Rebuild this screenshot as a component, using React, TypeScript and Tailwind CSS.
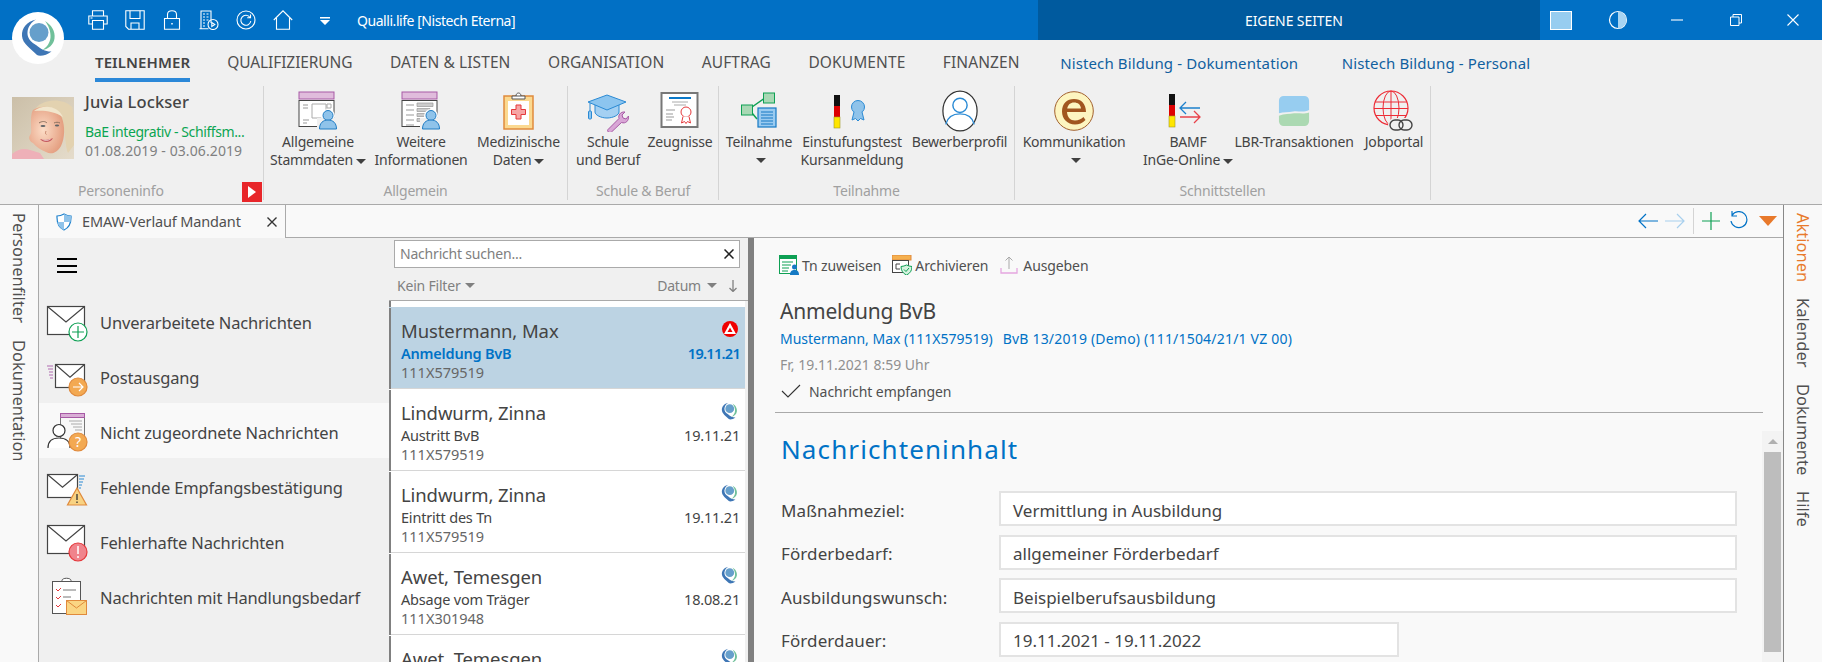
import type { ReactNode } from "react"

const LogoMark = ({ className, viewBox = "0 0 52 52" }: { className: string; viewBox?: string }) => (
  <svg viewBox={viewBox} className={className}>
    <circle cx="27" cy="20.5" r="9.5" fill="#669fcb" />
    <path d="M24 7.5C15 9.5 9.5 16 10 24c.5 8 9 12.5 15 19 2.5 1.5 10 .5 14.5-3.5-5 .5-11-2.5-15.500-6.500C18.500 30 15 25.500 15.500 20c.5-5.500 4-10 8.500-12.500Z" fill="#3e76b5" />
    <path d="M33 9c6 3.500 10.500 10 9.500 17.500-.8 6-6 10.500-12 11.500 4.500-3 7.500-7 8-12.500.4-6-2-12-5.500-16.500Z" fill="#70c09a" />
  </svg>
)

const QuickIcon = ({ children }: { children: ReactNode }) => (
  <svg viewBox="0 0 20 20" className="w-5 h-5" fill="none" stroke="white" strokeWidth="1.1">
    {children}
  </svg>
)

const topIcons = [
  <><path d="M4.500 6V.8h11V6M4.500 14H.8V6h18.400v8h-3.700" /><path d="M4.500 10.500h11v8.700h-11z" /><path d="M2.500 8h2" /></>,
  <><path d="M.8.800h18.400v18.400H3.500L.8 16.500z" /><path d="M5 .8v7.700h10V.8M6 19v-6h8v6" /></>,
  <><path d="M2.500 8.500h15v10.700h-15zM5.500 8.500V4.500C5.500 2 7.500.8 10 .8s4.500 1.200 4.500 3.700v4" /><path d="M10 13v1.500" strokeWidth="1.500" /></>,
  <><path d="M2 18.500V1h10v12M.5 18.800h9" /><path d="M4 4h2M7.500 4h2M4 7h2M7.500 7h2M4 10h2M7.500 10h2M4 13h2M4 16h2" /><circle cx="14" cy="14.500" r="5" /><path d="M12.800 12.500v4l3-2z" /></>,
  <><circle cx="10" cy="10" r="9" /><path d="M14 7.500A5 5 0 1 0 14.800 11M14.500 4.500v3.300h-3.300" /></>,
  <><path d="M.8 10 10 .8 19.200 10M3.500 8v11.200h13V8" /></>,
]

function TitleBar() {
  return (
    <div className="h-10 flex items-stretch bg-[#0170c5] text-white">
      <div className="flex-1 flex items-center pl-[88px] gap-[17px]">
        {topIcons.map((icon, i) => (
          <QuickIcon key={i}>{icon}</QuickIcon>
        ))}
        <svg viewBox="0 0 10 8" className="w-2.5 h-2 ml-[10px] mt-px" fill="white">
          <path d="M0 0h10v1.500H0zM0 3h10L5 8z" />
        </svg>
        <span className="ml-2.5 text-[14px] tracking-[-0.45px] whitespace-nowrap">Qualli.life [Nistech Eterna]</span>
      </div>
      <div className="w-[502px] bg-[#005a9e] flex items-center pl-[207px] text-[14px] tracking-[-0.1px]">EIGENE SEITEN</div>
      <div className="w-[282px] flex items-center pl-2.5">
        <div className="w-[22px] h-[19px] bg-[#97cdf0] border border-white" />
        <svg viewBox="0 0 20 20" className="w-5 h-5 ml-[36px]" >
          <circle cx="10" cy="10" r="8.500" fill="#0170c5" stroke="white" strokeWidth="1.2" />
          <path d="M10 1.500a8.500 8.500 0 0 1 0 17z" fill="#a8d4f2" />
        </svg>
        <svg viewBox="0 0 12 12" className="w-3 h-3 ml-[43px]" stroke="white" strokeWidth="1.1"><path d="M0 6h12" /></svg>
        <svg viewBox="0 0 12 12" className="w-3 h-3 ml-[47px]" stroke="white" strokeWidth="1" fill="none"><path d="M.5 3h8.500v8.500H.5zM3 3V.5h8.500V9H9" /></svg>
        <svg viewBox="0 0 12 12" className="w-3 h-3 ml-[45px]" stroke="white" strokeWidth="1.1"><path d="m.5.500 11 11M11.500.500l-11 11" /></svg>
      </div>
    </div>
  )
}

function RibbonTabs() {
  return (
    <div className="h-[45px] flex pl-[95px] bg-[#f0f0f0] text-[15.500px] text-[#505050] tracking-[0.1px] whitespace-nowrap">
      <div className="h-[42px] flex items-center text-[15px] font-semibold text-[#444] border-b-[4px] border-[#2b88d8] pt-[7px] mr-[37px]">TEILNEHMER</div>
      <div className="flex items-center gap-[37.500px] pt-[1px]">
        <span className="tracking-[-0.1px]">QUALIFIZIERUNG</span>
        <span>DATEN & LISTEN</span>
        <span>ORGANISATION</span>
        <span>AUFTRAG</span>
        <span>DOKUMENTE</span>
        <span>FINANZEN</span>
        <span className="text-[15px] tracking-[0.12px] text-[#10609f] ml-[3px]">Nistech Bildung - Dokumentation</span>
        <span className="text-[15px] tracking-[0.12px] text-[#10609f] ml-[6px]">Nistech Bildung - Personal</span>
      </div>
    </div>
  )
}

const Caret = () => <span className="inline-block align-middle ml-[3px] mt-px border-x-[5px] border-x-transparent border-t-[5px] border-t-[#404040]" />

const PersonBadge = () => (
  <g>
    <circle cx="30" cy="24.500" r="5" fill="#8fc3ea" stroke="#1f7cc4" />
    <path d="M21.500 38c0-6 3.500-9 8.500-9s8.500 3 8.500 9z" fill="#8fc3ea" stroke="#1f7cc4" />
  </g>
)

const ribbonIcons: Record<string, ReactNode> = {
  stamm: (
    <svg viewBox="0 0 40 40" className="w-10 h-10">
      <rect x="1" y="1" width="35" height="7" fill="#e0bcdc" stroke="#a75aa5" />
      <rect x="1" y="9.500" width="35" height="26" fill="#fff" stroke="#444" />
      <path d="M5 14h5M5 17h5M5 29h6M5 32h4" stroke="#999" />
      <path d="M14 13h14v14H14z" fill="#fff" stroke="#aaa" />
      <path d="M29 13h4v4h-4z" fill="none" stroke="#aaa" />
      <circle cx="30" cy="25" r="7" fill="#fff" /><rect x="19" y="27" width="21" height="13" fill="#f0f0f0" />
      <PersonBadge />
    </svg>
  ),
  weitere: (
    <svg viewBox="0 0 40 40" className="w-10 h-10">
      <rect x="1" y="1" width="35" height="7" fill="#e0bcdc" stroke="#a75aa5" />
      <rect x="1" y="9.500" width="35" height="26" fill="#fff" stroke="#444" />
      <path d="M5 14h8M5 19h8M5 24h8M5 29h8M5 34h8" stroke="#999" />
      <path d="M16 12h16v3.500H16zM16 17.500h13v3H16zM16 22.500h10v3H16zM16 27.500h6v3h-6z" fill="#ccc" stroke="#999" strokeWidth=".7" />
      <circle cx="30" cy="25" r="7" fill="#fff" /><rect x="19" y="27" width="21" height="13" fill="#f0f0f0" />
      <PersonBadge />
    </svg>
  ),
  med: (
    <svg viewBox="0 0 32 40" className="w-8 h-10">
      <rect x="1" y="5" width="29" height="33" fill="#fbd990" stroke="#e08a3c" strokeWidth="1.500" />
      <rect x="5" y="10" width="21" height="24" fill="#fff" />
      <path d="M9 5h13v3H9zM13 5c0-4 5-4 5 0" fill="#fff" stroke="#555" />
      <path d="M13 14h5v4.500h4.500v5H18V28h-5v-4.500H8.500v-5H13z" fill="#f6a5a5" stroke="#e5383b" />
    </svg>
  ),
  schule: (
    <svg viewBox="0 0 42 42" className="w-[42px] h-[42px]">
      <path d="M8 14v8c0 3 6 6 12 6s12-3 12-6v-8" fill="#a4d0f2" stroke="#2a8ad4" />
      <path d="M1 12 20 5l19 7-19 8z" fill="#8cc5ef" stroke="#2a8ad4" />
      <path d="M3 13v10" stroke="#2a8ad4" /><rect x="1.500" y="21" width="3" height="8" rx="1" fill="#8cc5ef" stroke="#2a8ad4" />
      <path d="M21 39.500 32 28.500c-1-3 1-7 6-6.500l-3 3 1 3 3 1 2.500-3c.5 5-3 8-7 6.500L24.500 42c-2 1.500-5-.5-3.500-2.500Z" fill="#d9a6d6" stroke="#a75aa5" />
    </svg>
  ),
  zeug: (
    <svg viewBox="0 0 40 40" className="w-10 h-10">
      <rect x="1.500" y="2" width="36" height="34" fill="#fff" stroke="#777" strokeWidth="2" />
      <path d="M9 7h22" stroke="#0a78c8" strokeWidth="2" /><path d="M12 11h16M14 14h12" stroke="#aaa" />
      <path d="M6 19h9M6 23h7M6 26h8M6 29h6" stroke="#999" />
      <circle cx="26" cy="21" r="5" fill="#fff" stroke="#e5383b" /><path d="M23 25.500 21.500 32l3-1.500 1.500 2 1.500-2 3 1.500-1.500-6.500" fill="#fff" stroke="#e5383b" />
    </svg>
  ),
  teil: (
    <svg viewBox="0 0 40 40" className="w-10 h-10">
      <path d="M13 16 26 7M13 22l5 6" stroke="#0ea054" strokeWidth="1.500" />
      <rect x="24.500" y="2" width="11" height="10" fill="#a8d8b4" stroke="#0ea054" />
      <rect x="2.500" y="14" width="11" height="10" fill="#a8d8b4" stroke="#0ea054" />
      <rect x="19" y="17" width="18" height="19" fill="#9acbf0" stroke="#1579c4" strokeWidth="1.200" />
      <path d="M22 21h12M22 24h12M22 27h12M22 30h12M22 33h12" stroke="#1579c4" />
    </svg>
  ),
  ribbon: (
    <svg viewBox="0 0 40 40" className="w-10 h-10">
      <rect x="2" y="4" width="6" height="11" fill="#111" />
      <rect x="2" y="15" width="6" height="11" fill="#dd0000" />
      <rect x="2" y="26" width="6" height="11" fill="#ffe600" stroke="#a09a2a" strokeWidth=".6" />
      <circle cx="26" cy="16" r="6.500" fill="#8fc3ea" stroke="#2a8ad4" />
      <path d="M22 21l-2 8 3.500-1.500L26 30l2.500-2.500L32 29l-2-8" fill="#8fc3ea" stroke="#2a8ad4" />
    </svg>
  ),
  profil: (
    <svg viewBox="0 0 40 44" className="w-[38px] h-[44px]">
      <ellipse cx="20" cy="22" rx="18" ry="21" fill="#fff" stroke="#333" strokeWidth="1.300" />
      <circle cx="20" cy="16" r="7.500" fill="#fff" stroke="#2a8ad4" strokeWidth="1.500" />
      <path d="M5 36c2-8 8-11 15-11s13 3 15 11" fill="none" stroke="#2a8ad4" strokeWidth="1.500" />
    </svg>
  ),
  kommu: (
    <svg viewBox="0 0 40 40" className="w-10 h-10">
      <circle cx="20" cy="20" r="19.300" fill="#fdf5c0" stroke="#a2602e" />
      <path d="M8 20.500C8 12.500 13 8 20 8s12 4.500 12 13H13c.3 5 3.300 8.500 8 8.500 3.500 0 6-1.300 8.500-3.500l2 3c-3 3-6.500 4.500-10.500 4.500C13.500 33.500 8 28 8 20.500Zm5.200-3H27c-.5-4-3-6-7-6-3.700 0-6 2.200-6.800 6Z" fill="#a1561f" />
    </svg>
  ),
  bamf: (
    <svg viewBox="0 0 40 40" className="w-10 h-10">
      <rect x="1" y="3" width="6" height="11" fill="#111" />
      <rect x="1" y="14" width="6" height="11" fill="#dd0000" />
      <rect x="1" y="25" width="6" height="11" fill="#ffe600" stroke="#a09a2a" strokeWidth=".6" />
      <path d="M32 17H12M18 11l-6 6 6 6" fill="none" stroke="#1d80cc" strokeWidth="1.300" />
      <path d="M12 25h20M26 19l6 6-6 6" fill="none" stroke="#e8424a" strokeWidth="1.300" transform="translate(0 1)" />
    </svg>
  ),
  lbr: (
    <svg viewBox="0 0 34 34" className="w-8 h-8">
      <path d="M1 6a5 5 0 0 1 5-5h22a5 5 0 0 1 5 5v10c-6 3-12 .5-17 1.500-5 .8-10 .5-15 2z" fill="#97cdf0" />
      <path d="M33 18.500V28a5 5 0 0 1-5 5H6a5 5 0 0 1-5-5v-6c6-2 11-1.500 16-2.500 5-.5 11 1 16-1z" fill="#abd9b2" />
    </svg>
  ),
  job: (
    <svg viewBox="0 0 42 42" className="w-[42px] h-[42px]" fill="none">
      <circle cx="18" cy="18" r="17" stroke="#ed2c36" strokeWidth="1.200" />
      <ellipse cx="18" cy="18" rx="8" ry="17" stroke="#ed2c36" />
      <path d="M18 1v34M2 12h32M1 18.500h34M3 25.500h30" stroke="#ed2c36" />
      <rect x="15" y="28" width="27" height="13" rx="6.500" fill="#f0f0f0" />
      <rect x="17" y="30" width="13" height="10" rx="5" stroke="#444" strokeWidth="1.400" />
      <rect x="26" y="30" width="13" height="10" rx="5" stroke="#444" strokeWidth="1.400" />
    </svg>
  ),
}

interface RibbonBtnProps {
  icon: string
  w: string
  l1: string
  l2?: string
  caretInline?: boolean
  caretOnly?: boolean
}

function RibbonBtn({ icon, w, l1, l2, caretInline, caretOnly }: RibbonBtnProps) {
  return (
    <div className={`${w} shrink-0 flex flex-col items-center text-[14px] leading-[18px] text-[#444] tracking-[-0.2px] whitespace-nowrap`}>
      <div className="h-[45px] flex items-center justify-center">{ribbonIcons[icon]}</div>
      <div>{l1}</div>
      {l2 && (
        <div>
          {l2}
          {caretInline && <Caret />}
        </div>
      )}
      {caretOnly && (
        <div className="h-[18px] flex items-center">
          <Caret />
        </div>
      )}
    </div>
  )
}

function RibbonGroup({ w, label, children }: { w: string; label: string; children: ReactNode }) {
  return (
    <div className={`${w} shrink-0 h-[114px] mt-px border-r border-[#d4d4d4] flex flex-col`}>
      <div className="flex flex-1 pt-0.5">{children}</div>
      <div className="h-[18px] text-center text-[14px] leading-[18px] text-[#a0a0a0] tracking-[-0.2px]">{label}</div>
    </div>
  )
}

const Avatar = () => (
  <svg viewBox="0 0 62 62" className="w-[62px] h-[62px] shrink-0">
    <defs>
      <linearGradient id="bgp" x1="0" x2="1" y1="0" y2="1">
        <stop offset="0" stopColor="#cbbfa8" />
        <stop offset="1" stopColor="#e5dccb" />
      </linearGradient>
      <radialGradient id="face" cx=".4" cy=".5" r=".65">
        <stop offset="0" stopColor="#fcdcc6" />
        <stop offset="1" stopColor="#e2997a" />
      </radialGradient>
      <filter id="soft"><feGaussianBlur stdDeviation=".5" /></filter>
    </defs>
    <rect width="62" height="62" fill="url(#bgp)" />
    <g filter="url(#soft)">
      <path d="M22 14C28 2 50 0 60 10l2 12v26l-6 8c-3-6-2-20-6-30-4-8-16-8-28-12Z" fill="#e3d2b0" />
      <path d="M0 57c6-5 12-6 18-4l10 3 4 6H0Z" fill="#eeb0b8" />
      <path d="M21 13c10-6 24-4 29 8 3 8 3 20-1 28-4 7-10 9-15 6-5-2-10-5-13-9-3-1-5-5-3-8 2-2 1-6 1-10 0-6 0-12 2-15Z" fill="url(#face)" />
      <path d="M22 14c8-7 24-6 29 6-9-6-20-7-29-6Z" fill="#f1e6cd" />
      <path d="M27 26c3-2 6-2 8 0M42 26c2-1 4-1 6 0" stroke="#8d7260" strokeWidth="1" fill="none" />
      <ellipse cx="31" cy="29" rx="2.500" ry="1.100" fill="#5f6468" />
      <ellipse cx="45" cy="28.500" rx="2.200" ry="1.100" fill="#5f6468" />
      <path d="M34 34c-.5 1.500-1 3 .5 3.500" stroke="#c98a70" fill="none" />
      <path d="M28 42c4 1 9 1 13-1-2 5-10 5-13 1Z" fill="#c4585e" />
      <path d="M30 42.500c3 .5 6 .5 9-.5-2 2-7 2-9 .5Z" fill="#fff" />
    </g>
  </svg>
)

function Ribbon() {
  return (
    <div className="h-[120px] flex bg-[#f0f0f0] border-b border-[#aaa]">
      <div className="w-[264px] shrink-0 h-[114px] mt-px border-r border-[#d4d4d4] flex flex-col relative">
        <div className="flex flex-1 pl-3 pt-[11px]">
          <Avatar />
          <div className="pl-[11px] -mt-[7px] whitespace-nowrap">
            <div className="text-[16.500px] leading-[24px] font-medium text-[#444] tracking-[0.1px]">Juvia Lockser</div>
            <div className="text-[14px] leading-[19px] text-[#0ba552] mt-[8px] tracking-[-0.4px]">BaE integrativ - Schiffsm...</div>
            <div className="text-[14px] leading-[19px] text-[#808080] tracking-[0.1px]">01.08.2019 - 03.06.2019</div>
          </div>
        </div>
        <div className="h-[18px] pl-[78px] text-[14px] leading-[18px] text-[#a0a0a0] tracking-[-0.2px]">Personeninfo</div>
        <div className="absolute left-[242px] top-[96px] w-5 h-5 bg-[#e8262a] flex items-center justify-center">
          <svg viewBox="0 0 8 12" className="w-2 h-3" fill="white"><path d="M0 0l8 6-8 6z" /></svg>
        </div>
      </div>
      <RibbonGroup w="w-[304px]" label="Allgemein">
        <RibbonBtn icon="stamm" w="w-[108px]" l1="Allgemeine" l2="Stammdaten" caretInline />
        <RibbonBtn icon="weitere" w="w-[98px]" l1="Weitere" l2="Informationen" />
        <RibbonBtn icon="med" w="w-[97px]" l1="Medizinische" l2="Daten" caretInline />
      </RibbonGroup>
      <RibbonGroup w="w-[151px]" label="Schule & Beruf">
        <RibbonBtn icon="schule" w="w-[80px]" l1="Schule" l2="und Beruf" />
        <RibbonBtn icon="zeug" w="w-[64px]" l1="Zeugnisse" />
      </RibbonGroup>
      <RibbonGroup w="w-[296px]" label="Teilnahme">
        <RibbonBtn icon="teil" w="w-[80px]" l1="Teilnahme" caretOnly />
        <RibbonBtn icon="ribbon" w="w-[106px]" l1="Einstufungstest" l2="Kursanmeldung" />
        <RibbonBtn icon="profil" w="w-[109px]" l1="Bewerberprofil" />
      </RibbonGroup>
      <RibbonGroup w="w-[416px]" label="Schnittstellen">
        <RibbonBtn icon="kommu" w="w-[118px]" l1="Kommunikation" caretOnly />
        <RibbonBtn icon="bamf" w="w-[110px]" l1="BAMF" l2="InGe-Online" caretInline />
        <RibbonBtn icon="lbr" w="w-[102px]" l1="LBR-Transaktionen" />
        <div className="ml-[16px]">
          <RibbonBtn icon="job" w="w-[66px]" l1="Jobportal" />
        </div>
      </RibbonGroup>
    </div>
  )
}

const Env = ({ x = 0.5, y = 0.5, w = 37, h = 28 }: { x?: number; y?: number; w?: number; h?: number }) => (
  <g>
    <rect x={x} y={y} width={w} height={h} fill="#fff" stroke="#444" strokeWidth="1.200" />
    <path d={`M${x} ${y}L${x + w * 0.5} ${y + h * 0.55}L${x + w} ${y}`} fill="none" stroke="#444" strokeWidth="1.200" />
  </g>
)

const Badge = ({ fill, stroke, children }: { fill: string; stroke: string; children: ReactNode }) => (
  <g>
    <circle cx="31" cy="31" r="9" fill={fill} stroke={stroke} strokeWidth="1.200" />
    {children}
  </g>
)

const navItems: { label: string; icon: ReactNode }[] = [
  {
    label: "Unverarbeitete Nachrichten",
    icon: (
      <>
        <Env y={5.5} />
        <Badge fill="#fff" stroke="#0ea054"><path d="M31 25v12M25 31h12" stroke="#0ea054" strokeWidth="1.200" /></Badge>
      </>
    ),
  },
  {
    label: "Postausgang",
    icon: (
      <>
        <path d="M0 10h6M1 13h5M2 16h4M2 19h4M3 22h3" stroke="#b06ab0" />
        <Env x={8.5} y={8.5} w={29} h={23} />
        <Badge fill="#f3a952" stroke="#e08a3c"><path d="M26 31h10M32 27l4 4-4 4" fill="none" stroke="#fff" strokeWidth="1.200" /></Badge>
      </>
    ),
  },
  {
    label: "Nicht zugeordnete Nachrichten",
    icon: (
      <>
        <rect x="13.500" y="2.500" width="24" height="28" fill="#f8f8f8" stroke="#777" />
        <rect x="13.500" y="2.500" width="24" height="4" fill="#d9aed6" stroke="#a75aa5" />
        <path d="M22 10h13M24 13h11M26 16h9M28 19h7" stroke="#aaa" />
        <path d="M1 37c0-7 4-10 11-10s11 3 11 10" fill="#fff" stroke="#333" strokeWidth="1.200" />
        <circle cx="12" cy="19.500" r="6" fill="#fff" stroke="#333" strokeWidth="1.200" />
        <Badge fill="#f3a952" stroke="#e08a3c"><text x="31" y="36" textAnchor="middle" fontSize="14" fill="#fff" fontFamily="Noto Sans">?</text></Badge>
      </>
    ),
  },
  {
    label: "Fehlende Empfangsbestätigung",
    icon: (
      <>
        <path d="M32 10h6M32 13h5M32 16h4M32 19h3M32 22h2" stroke="#2a8ad4" />
        <Env y={8.5} w={30} h={23} />
        <path d="M30 22 39.500 39h-19Z" fill="#f8d282" stroke="#e08a3c" strokeWidth="1.200" />
        <path d="M30 28v6M30 35.500v1.500" stroke="#333" strokeWidth="1.300" />
      </>
    ),
  },
  {
    label: "Fehlerhafte Nachrichten",
    icon: (
      <>
        <Env y={4.5} />
        <Badge fill="#f0848c" stroke="#e5383b"><path d="M31 25v8M31 35v2" stroke="#fff" strokeWidth="1.500" /></Badge>
      </>
    ),
  },
  {
    label: "Nachrichten mit Handlungsbedarf",
    icon: (
      <>
        <rect x="5.500" y="5.500" width="28" height="32" fill="#fff" stroke="#555" />
        <path d="M15 5.500h9v-1c0-3-9-3-9 0z" fill="#fff" stroke="#555" />
        <path d="M9 13l2 2 3-3M9 21l2 2 3-3M9 29l2 2 3-3" fill="none" stroke="#e5383b" />
        <path d="M16 14h13M16 21h8" stroke="#777" />
        <rect x="19.500" y="24.500" width="20" height="14" fill="#fad583" stroke="#e08a3c" />
        <path d="M19.500 24.500 29.500 32l10-7.500" fill="none" stroke="#e08a3c" />
      </>
    ),
  },
]

function SideNav() {
  return (
    <div className="w-[350px] shrink-0 bg-[#f0f0f0] flex flex-col">
      <div className="h-[55px] pt-5 pl-[18px]">
        <div className="w-5 h-[15px] flex flex-col justify-between">
          <div className="h-0.5 bg-black" />
          <div className="h-0.5 bg-black" />
          <div className="h-0.5 bg-black" />
        </div>
      </div>
      {navItems.map((n, i) => (
        <div key={n.label} className={`h-[55px] flex items-center pl-2 ${i === 2 ? "bg-[#f9f9f9]" : ""}`}>
          <svg viewBox="0 0 40 40" className="w-10 h-10 shrink-0 overflow-visible">{n.icon}</svg>
          <span className="ml-[13px] mt-[5px] text-[16.500px] text-[#444] tracking-[-0.15px] whitespace-nowrap">{n.label}</span>
        </div>
      ))}
    </div>
  )
}

const messages = [
  { name: "Mustermann, Max", sub: "Anmeldung BvB", id: "111X579519", date: "19.11.21", ba: true },
  { name: "Lindwurm, Zinna", sub: "Austritt BvB", id: "111X579519", date: "19.11.21" },
  { name: "Lindwurm, Zinna", sub: "Eintritt des Tn", id: "111X579519", date: "19.11.21" },
  { name: "Awet, Temesgen", sub: "Absage vom Träger", id: "111X301948", date: "18.08.21" },
  { name: "Awet, Temesgen" },
]

function MessageList() {
  return (
    <div className="w-[365px] shrink-0 flex">
      <div className="w-[359px] bg-[#f0f0f0] flex flex-col overflow-hidden">
        <div className="h-[63px] shrink-0 border-b border-[#aaa] flex flex-col">
          <div className="mt-0.5 ml-[5px] w-[346px] h-[28px] bg-white border border-[#aaa] flex items-center justify-between pl-[5px] pr-[5px]">
            <span className="text-[14px] text-[#808080] tracking-[-0.2px]">Nachricht suchen...</span>
            <svg viewBox="0 0 10 10" className="w-2.5 h-2.5" stroke="#222" strokeWidth="1.500"><path d="m.5.500 9 9M9.500.500l-9 9" /></svg>
          </div>
          <div className="h-[33px] flex items-center pl-2 pr-2.5 pt-1 text-[14px] text-[#808080] tracking-[-0.2px]">
            <span>Kein Filter</span>
            <span className="ml-[4px] border-x-[5.500px] border-x-transparent border-t-[5px] border-t-[#808080]" />
            <span className="ml-auto">Datum</span>
            <span className="ml-[6px] border-x-[5.500px] border-x-transparent border-t-[5px] border-t-[#808080]" />
            <svg viewBox="0 0 10 12" className="w-2.5 h-3 ml-[11px]" stroke="#808080" fill="none" strokeWidth="1.300"><path d="M5 0v11M1.500 8 5 11.500 8.500 8" /></svg>
          </div>
        </div>
        <div className="flex-1 mr-[3px] bg-white flex flex-col overflow-hidden">
          <div className="h-[6px] shrink-0 border-l-2 border-[#808080]" />
          {messages.map((m, i) => (
            <div key={i} className={`h-[82px] shrink-0 border-b border-[#d6d6d6] pt-px ${m.ba ? "bg-[#bcd3e3]" : ""}`}>
              <div className="h-[81px] border-l-2 border-[#808080] pl-2.5 pr-[5px] pt-2.5">
                <div className="h-[26px] flex items-center justify-between">
                  <span className="text-[18.500px] leading-[26px] text-[#444] tracking-[-0.1px]">{m.name}</span>
                  <span className="mr-[2px] -mt-1">
                    {m.ba ? (
                      <svg viewBox="0 0 16 16" className="w-4 h-4">
                        <circle cx="8" cy="8" r="8" fill="#f00000" />
                        <path d="M8 2 14 13H2Z" fill="#fff" />
                        <path d="M8 6.500 10.500 11h-5Z" fill="#f00000" />
                      </svg>
                    ) : (
                      <LogoMark className="w-[17px] h-[18px]" viewBox="9 6 35 39" />
                    )}
                  </span>
                </div>
                {m.sub && (
                  <>
                    <div className={`h-[19px] flex justify-between items-center text-[14.500px] tracking-[-0.2px] ${m.ba ? "text-[#0072c6] font-semibold" : "text-[#444]"}`}>
                      <span>{m.sub}</span>
                      <span className={m.ba ? "tracking-[-0.7px]" : ""}>{m.date}</span>
                    </div>
                    <div className="h-[19px] leading-[19px] text-[14.500px] text-[#666]">{m.id}</div>
                  </>
                )}
              </div>
            </div>
          ))}
        </div>
      </div>
      <div className="w-[6px] bg-[#808080]" />
    </div>
  )
}

const fields = [
  { label: "Maßnahmeziel:", value: "Vermittlung in Ausbildung", w: "w-[738px]" },
  { label: "Förderbedarf:", value: "allgemeiner Förderbedarf", w: "w-[738px]" },
  { label: "Ausbildungswunsch:", value: "Beispielberufsausbildung", w: "w-[738px]" },
  { label: "Förderdauer:", value: "19.11.2021 - 19.11.2022", w: "w-[400px]" },
]

function Detail() {
  return (
    <div className="flex-1 min-w-0 bg-[#f9f9f9] flex flex-col overflow-hidden">
      <div className="pl-[26px] pt-[17px]">
        <div className="h-5 -ml-px flex items-center text-[14px] text-[#505050] tracking-[-0.1px] whitespace-nowrap">
          <svg viewBox="0 0 20 20" className="w-5 h-5">
            <rect x=".5" y=".5" width="17" height="18" fill="#fff" stroke="#0ea054" />
            <rect x=".5" y=".5" width="17" height="3.500" fill="#0ea054" />
            <path d="M3 7h11M3 10h9M3 13h7M3 16h6" stroke="#0ea054" />
            <circle cx="15.500" cy="12" r="2.500" fill="#1579c4" />
            <path d="M11 20c0-4 2-5 4.500-5s4.500 1 4.500 5z" fill="#1579c4" />
          </svg>
          <span className="ml-[3px]">Tn zuweisen</span>
          <svg viewBox="0 0 20 20" className="w-5 h-5 ml-[11px]">
            <rect x="0" y="0" width="19" height="5" fill="#f5b04f" stroke="#e08a3c" />
            <rect x=".5" y="5.500" width="16" height="12" fill="#fff" stroke="#444" />
            <path d="M4 9h4M4 9v5h4" stroke="#444" fill="none" />
            <path d="M9 11.500c2 0 4-.8 5.500-1.500 1.500.7 3.500 1.500 5.500 1.500 0 4-2 7-5.500 8.500C11 18.500 9 15.500 9 11.500Z" fill="#d6f2df" stroke="#0ea054" />
            <path d="m12 14.500 2 2 3-3.500" stroke="#0ea054" fill="none" />
          </svg>
          <span className="ml-[3px]">Archivieren</span>
          <svg viewBox="0 0 18 20" className="w-[18px] h-5 ml-[12px]" fill="none">
            <path d="M1 13v5h16v-5" stroke="#e5a7e0" strokeWidth="1.300" />
            <path d="M9 14V2M5.500 5.500 9 2l3.500 3.500" stroke="#a9a9a9" />
          </svg>
          <span className="ml-[5px]">Ausgeben</span>
        </div>
        <div className="mt-[22px] h-7 text-[21px] leading-[28px] text-[#444] tracking-[-0.2px]">Anmeldung BvB</div>
        <div className="mt-1 h-5 flex gap-[10px] text-[14px] leading-[20px] text-[#0072c6] whitespace-nowrap">
          <span>Mustermann, Max (111X579519)</span>
          <span className="tracking-[0.2px]">BvB 13/2019 (Demo) (111/1504/21/1 VZ 00)</span>
        </div>
        <div className="mt-1.5 h-5 text-[14px] leading-[20px] text-[#909090]">Fr, 19.11.2021 8:59 Uhr</div>
        <div className="mt-1.5 h-5 flex items-center text-[14px] text-[#505050] tracking-[-0.05px]">
          <svg viewBox="0 0 20 14" className="w-5 h-3.5 ml-px" fill="none" stroke="#333" strokeWidth="1.100"><path d="M1 7l6 6L19 1" /></svg>
          <span className="ml-2">Nachricht empfangen</span>
        </div>
      </div>
      <div className="mt-[11px] ml-[21px] w-[988px] h-px bg-[#aaa] shrink-0" />
      <div className="flex-1 flex min-h-0 mt-[18px]">
        <div className="flex-1 pl-[27px]">
          <div className="h-9 text-[26px] leading-[36px] text-[#0072c6] tracking-[1.1px]">Nachrichteninhalt</div>
          <div className="mt-[24px] flex flex-col gap-[8.500px]">
            {fields.map((f) => (
              <div key={f.label} className="flex items-center h-[35px] text-[17px] text-[#444]">
                <span className="w-[218px] shrink-0 pt-1 tracking-[0.1px]">{f.label}</span>
                <div className={`${f.w} h-[35px] bg-white border-2 border-[#e3e3e3] pl-3 pt-1 flex items-center`}>{f.value}</div>
              </div>
            ))}
          </div>
        </div>
        <div className="w-[21px] shrink-0 bg-[#f3f3f3] flex flex-col items-center">
          <div className="h-[21px] flex items-center justify-center">
            <span className="border-x-[5px] border-x-transparent border-b-[5px] border-b-[#b0b0b0]" />
          </div>
          <div className="w-[17px] h-[200px] bg-[#bdbdbd]" />
        </div>
      </div>
    </div>
  )
}

function TabBar() {
  return (
    <div className="h-[33px] shrink-0 flex bg-[#f9f9f9]">
      <div className="w-[247px] shrink-0 border-r border-[#aaa] flex items-center pl-[17px]">
        <svg viewBox="0 0 16 18" className="w-4 h-[18px]">
          <path d="M8 1c2 1.200 4.500 2 7 2 .3 6.500-1.500 11.500-7 14C2.500 14.500.7 9.500 1 3c2.500 0 5-.8 7-2Z" fill="#fff" stroke="#1d80cc" strokeWidth="1.200" />
          <path d="M8 1c2 1.200 4.500 2 7 2 0 2.200-.1 4-.5 6H8ZM8 9v8C4 15 2 12.500 1.500 9Z" fill="#8fc3ea" />
        </svg>
        <span className="ml-2.5 text-[14.500px] text-[#505050] tracking-[-0.15px] whitespace-nowrap">EMAW-Verlauf Mandant</span>
        <svg viewBox="0 0 10 10" className="w-2.5 h-2.5 ml-auto mr-2" stroke="#333" strokeWidth="1.400"><path d="m.5.500 9 9M9.500.500l-9 9" /></svg>
      </div>
      <div className="flex-1 border-b border-[#aaa] flex items-center justify-end pr-[6px]">
        <svg viewBox="0 0 20 16" className="w-5 h-4" fill="none" stroke="#0072c6" strokeWidth="1.200"><path d="M20 8H1M8 1 1 8l7 7" /></svg>
        <svg viewBox="0 0 20 16" className="w-5 h-4 ml-[7px]" fill="none" stroke="#a8d0ee" strokeWidth="1.200"><path d="M0 8h19M12 1l7 7-7 7" /></svg>
        <div className="w-px h-[26px] bg-[#d4d4d4] ml-[8px]" />
        <svg viewBox="0 0 20 20" className="w-5 h-5 ml-[7px]" stroke="#0ea054" strokeWidth="1.200"><path d="M10 1v18M1 10h18" /></svg>
        <svg viewBox="0 0 18 20" className="w-[18px] h-5 ml-[9px]" fill="none" stroke="#0072c6" strokeWidth="1.200"><path d="M2 4.500A8 8 0 1 1 1 10M2 0v5h5" /></svg>
        <svg viewBox="0 0 18 10" className="w-[18px] h-2.5 ml-[11px]" fill="#e8792b"><path d="M0 0h18L9 10z" /></svg>
      </div>
    </div>
  )
}

export default function App() {
  return (
    <div className="relative w-[1822px] h-[662px] overflow-hidden flex flex-col bg-[#f9f9f9] font-['Noto_Sans','Liberation_Sans',sans-serif]">
      <TitleBar />
      <div className="absolute left-3 top-3 w-[52px] h-[52px] rounded-full bg-white z-10">
        <LogoMark className="w-[52px] h-[52px]" />
      </div>
      <RibbonTabs />
      <Ribbon />
      <div className="flex-1 flex min-h-0">
        <div className="w-[39px] shrink-0 border-r border-[#aaa] pt-2 pr-px flex flex-col items-center gap-[17px] text-[16.500px] text-[#505050]">
          <span className="[writing-mode:vertical-rl]">Personenfilter</span>
          <span className="[writing-mode:vertical-rl]">Dokumentation</span>
        </div>
        <div className="w-[1744px] shrink-0 flex flex-col">
          <TabBar />
          <div className="flex-1 flex min-h-0">
            <SideNav />
            <MessageList />
            <Detail />
          </div>
        </div>
        <div className="flex-1 border-l border-[#888] pt-2 flex flex-col items-center gap-[16px] text-[16.500px] text-[#505050]">
          <span className="[writing-mode:vertical-rl] text-[#e8792b]">Aktionen</span>
          <span className="[writing-mode:vertical-rl]">Kalender</span>
          <span className="[writing-mode:vertical-rl]">Dokumente</span>
          <span className="[writing-mode:vertical-rl]">Hilfe</span>
        </div>
      </div>
    </div>
  )
}
